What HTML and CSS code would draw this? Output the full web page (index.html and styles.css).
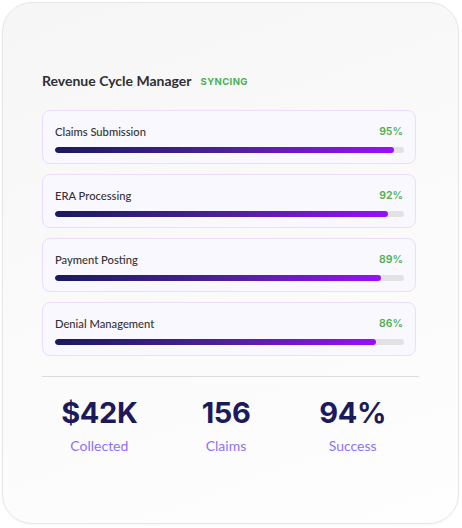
FILE: index.html
```html
<!DOCTYPE html>
<html lang="en">
<head>
<meta charset="utf-8">
<title>Revenue Cycle Manager</title>
<link rel="stylesheet" href="styles.css">
</head>
<body>
  <div class="card">
    <div class="header">
      <h1 class="title">Revenue Cycle Manager</h1>
      <span class="status">SYNCING</span>
    </div>
    <div class="items">
      <div class="item">
        <div class="item-row"><span class="item-label">Claims Submission</span><span class="item-pct">95%</span></div>
        <div class="track"><div class="fill" style="width: 97.1%"></div></div>
      </div>
      <div class="item">
        <div class="item-row"><span class="item-label">ERA Processing</span><span class="item-pct">92%</span></div>
        <div class="track"><div class="fill" style="width: 95.4%"></div></div>
      </div>
      <div class="item">
        <div class="item-row"><span class="item-label">Payment Posting</span><span class="item-pct">89%</span></div>
        <div class="track"><div class="fill" style="width: 93.4%"></div></div>
      </div>
      <div class="item">
        <div class="item-row"><span class="item-label">Denial Management</span><span class="item-pct">86%</span></div>
        <div class="track"><div class="fill" style="width: 91.9%"></div></div>
      </div>
    </div>
    <div class="divider"></div>
    <div class="stats">
      <div class="stat"><div class="stat-value">$42K</div><div class="stat-label">Collected</div></div>
      <div class="stat"><div class="stat-value">156</div><div class="stat-label">Claims</div></div>
      <div class="stat"><div class="stat-value">94%</div><div class="stat-label">Success</div></div>
    </div>
  </div>
</body>
</html>
```

FILE: styles.css
```css
* { box-sizing: border-box; }
html, body { margin: 0; padding: 0; background: #ffffff; }
body {
  padding: 2px;
  font-family: "Lato", "Liberation Sans", sans-serif;
}
.card {
  width: 457px;
  height: 522px;
  border: 1px solid #e6e6e8;
  border-radius: 30px;
  background: linear-gradient(160deg, #f6f6f7 0%, #fbfbfc 60%, #fefeff 100%);
  box-shadow: 0 1px 3px rgba(0,0,0,0.04);
  padding: 69px 39px 0 39px;
}
.header {
  display: flex;
  align-items: center;
  gap: 9px;
  height: 18px;
}
.title {
  margin: 0;
  font-family: "Lato", sans-serif;
  font-weight: 700;
  font-size: 14px;
  line-height: 18px;
  color: #2f2f33;
}
.status {
  font-family: "Inter", sans-serif;
  font-weight: 700;
  font-size: 9.5px;
  letter-spacing: 0.4px;
  color: #4caf50;
  line-height: 18px;
  padding-top: 1px;
}
.items {
  margin-top: 20px;
  margin-right: 3px;
  display: flex;
  flex-direction: column;
  gap: 10px;
}
.item {
  height: 54px;
  border: 1px solid #ecdcfd;
  border-radius: 8px;
  background: #faf8ff;
  padding: 12px 12px 10px 12px;
}
.item-row {
  display: flex;
  justify-content: space-between;
  align-items: center;
  height: 16px;
}
.item-label {
  font-family: "Lato", sans-serif;
  font-weight: 500;
  font-size: 11.2px;
  color: #333336;
}
.item-pct {
  font-family: "Inter", sans-serif;
  font-weight: 600;
  font-size: 10.5px;
  color: #4caf50;
}
.track {
  margin-top: 8px;
  margin-right: -1px;
  height: 6px;
  border-radius: 3px;
  background: #e2e2e4;
  overflow: hidden;
}
.fill {
  height: 100%;
  border-radius: 3px;
  background: linear-gradient(90deg, #1a1a5c 0%, #4a2296 50%, #9a0ffa 100%);
}
.divider {
  margin-top: 20px;
  height: 1px;
  background: #dcdcde;
}
.stats {
  display: grid;
  grid-template-columns: repeat(3, 1fr);
  margin: 0 3px 0 -6px;
  padding-top: 18px;
}
.stat {
  display: flex;
  flex-direction: column;
  align-items: center;
}
.stat-value {
  font-family: "Inter", sans-serif;
  font-weight: 700;
  font-size: 29px;
  line-height: 36px;
  letter-spacing: -0.4px;
  color: #1b1b5c;
}
.stat-label {
  margin-top: 6px;
  font-family: "Lato", sans-serif;
  font-size: 14px;
  line-height: 18px;
  color: #8c72f8;
}
```
